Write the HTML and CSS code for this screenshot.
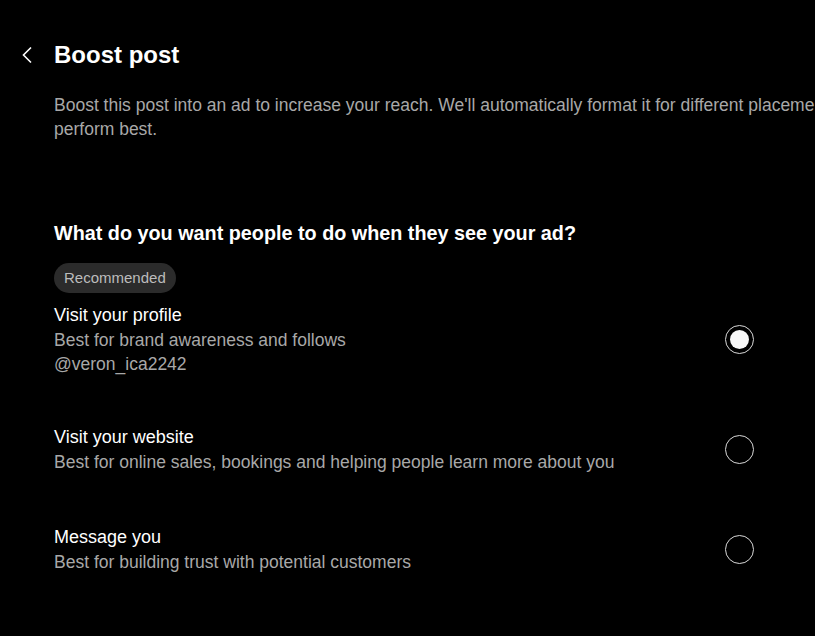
FILE: index.html
```html
<!DOCTYPE html>
<html>
<head>
    <title>Boost post</title>
    <link rel="stylesheet" href="styles.css">
</head>
<body>
    <div class="page">
        <div class="header">
            <button class="back" aria-label="Back">
                <svg width="12" height="18" viewBox="0 0 12 18"><path d="M10 1.5 L2.5 9 L10 16.5" fill="none" stroke="#fff" stroke-width="1.6"/></svg>
            </button>
            <h1>Boost post</h1>
        </div>
        <p class="intro">Boost this post into an ad to increase your reach. We'll automatically format it for different placements where it's likely to perform best.</p>

        <h2>What do you want people to do when they see your ad?</h2>
        <span class="pill">Recommended</span>

        <div class="options">
            <label class="option first">
                <div class="option-text">
                    <div class="option-title">Visit your profile</div>
                    <div class="option-desc">Best for brand awareness and follows</div>
                    <div class="option-desc">@veron_ica2242</div>
                </div>
                <span class="radio checked"></span>
            </label>
            <label class="option">
                <div class="option-text">
                    <div class="option-title">Visit your website</div>
                    <div class="option-desc">Best for online sales, bookings and helping people learn more about you</div>
                </div>
                <span class="radio"></span>
            </label>
            <label class="option">
                <div class="option-text">
                    <div class="option-title">Message you</div>
                    <div class="option-desc">Best for building trust with potential customers</div>
                </div>
                <span class="radio"></span>
            </label>
        </div>
    </div>
</body>
</html>
```

FILE: styles.css
```css
body {
    margin: 0;
    background-color: #000;
    color: #fff;
    font-family: 'Liberation Sans', Arial, sans-serif;
    overflow: hidden;
}

.page {
    width: 1100px;
    padding: 39px 0 0 0;
}

.header {
    display: flex;
    align-items: center;
}

.back {
    background: none;
    border: none;
    padding: 0;
    width: 54px;
    height: 32px;
    display: flex;
    align-items: center;
    justify-content: center;
    cursor: pointer;
}

h1 {
    margin: 0;
    font-size: 24px;
    font-weight: bold;
    line-height: 32px;
}

.intro {
    margin: 22px 0 0 54px;
    width: 980px;
    font-size: 17.5px;
    line-height: 24px;
    color: #a8a8a8;
}

h2 {
    margin: 79px 0 0 54px;
    font-size: 19.8px;
    line-height: 26px;
}

.pill {
    display: inline-block;
    margin: 17px 0 0 54px;
    padding: 0 10px;
    height: 30px;
    line-height: 30px;
    border-radius: 15px;
    background-color: #2b2b2b;
    color: #bcbcbc;
    font-size: 15px;
}

.options {
    width: 700px;
    margin-left: 54px;
}

.option {
    display: flex;
    align-items: center;
    justify-content: space-between;
    padding: 10px 0 40px;
}

.option.first {
    padding: 9px 0 38px;
}

.option-title {
    font-size: 18px;
    line-height: 26px;
}

.option-desc {
    font-size: 17.5px;
    line-height: 24px;
    color: #a8a8a8;
}

.radio {
    width: 27px;
    height: 27px;
    border: 1.5px solid #d8d8d8;
    border-radius: 50%;
    display: flex;
    align-items: center;
    justify-content: center;
    flex: none;
}

.radio.checked::after {
    content: '';
    width: 19px;
    height: 19px;
    border-radius: 50%;
    background-color: #f8f8f8;
}
```
